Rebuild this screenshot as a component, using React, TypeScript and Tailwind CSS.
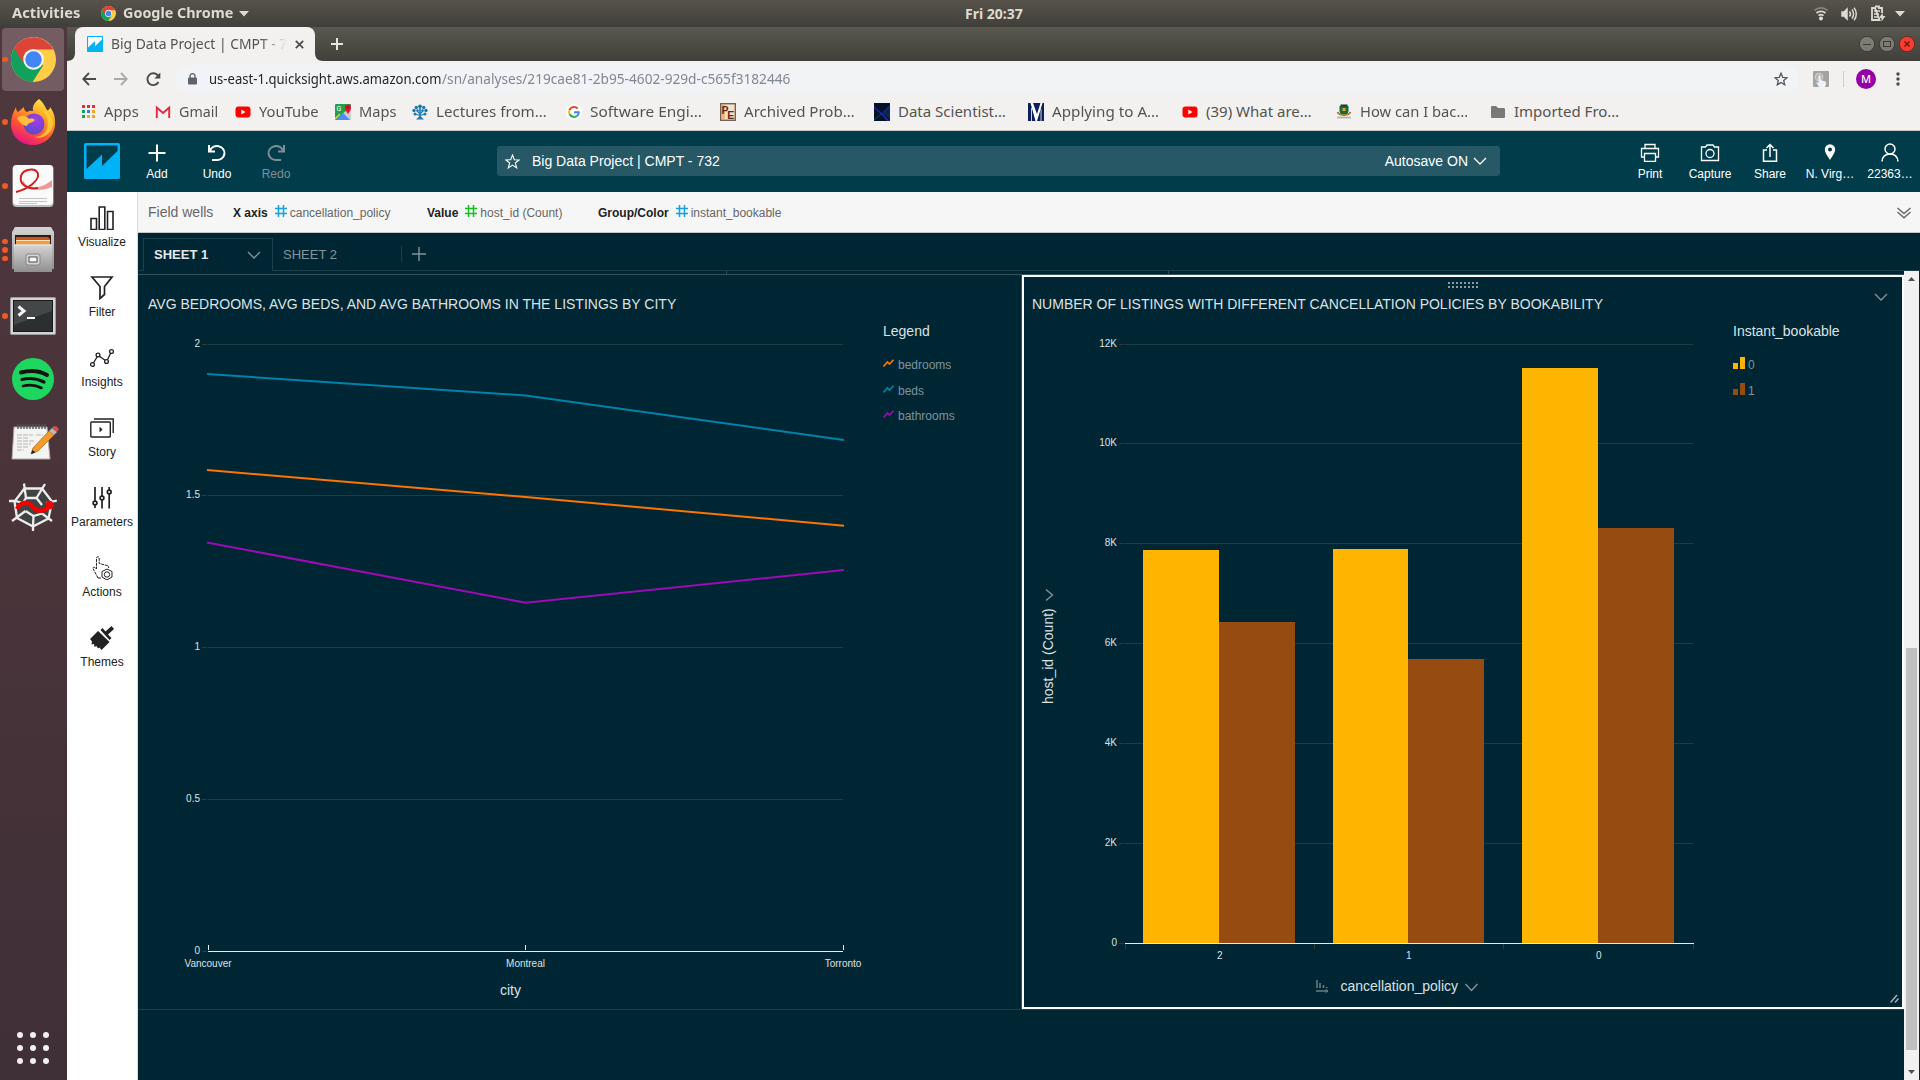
import React, { useLayoutEffect, useRef, useState } from "react";

/* Text that is condensed or widened to fill an exact width. */
function Fit({ w, className = "", children }: { w: number; className?: string; children: React.ReactNode }) {
  const ref = useRef<HTMLSpanElement>(null);
  const [scale, setScale] = useState(1);
  useLayoutEffect(() => {
    if (ref.current) setScale(w / ref.current.offsetWidth);
  }, [w]);
  return (
    <span className="inline-block shrink-0 whitespace-nowrap" style={{ width: w }}>
      <span ref={ref} className={"inline-block origin-left whitespace-nowrap " + className} style={{ transform: `scaleX(${scale})` }}>
        {children}
      </span>
    </span>
  );
}

function ChromeLogo({ size }: { size: number }) {
  return (
    <svg width={size} height={size} viewBox="0 0 48 48" className="shrink-0">
      <circle cx="24" cy="24" r="24" fill="#ffcd46" />
      <path d="M24 24 L3.2 12 A24 24 0 0 0 23 48 L34.4 30Z" fill="#12a05d" />
      <path d="M3.2 12 A24 24 0 0 1 45.2 13.2 L24 13.2 A10.8 10.8 0 0 0 14 29Z" fill="#db4437" />
      <circle cx="24" cy="24" r="11" fill="#f3f3f3" />
      <circle cx="24" cy="24" r="8.8" fill="#4285f4" />
    </svg>
  );
}

function FirefoxLogo() {
  return (
    <svg width="46" height="48" viewBox="0 0 46 48">
      <defs>
        <linearGradient id="ffo" x1="0.8" y1="0" x2="0.3" y2="1">
          <stop offset="0" stopColor="#fff44f" />
          <stop offset="0.35" stopColor="#ffa021" />
          <stop offset="0.7" stopColor="#ff4b3a" />
          <stop offset="1" stopColor="#e3128c" />
        </linearGradient>
        <radialGradient id="ffp" cx="0.6" cy="0.3" r="0.8">
          <stop offset="0" stopColor="#a43be8" />
          <stop offset="1" stopColor="#4b4ec8" />
        </radialGradient>
      </defs>
      <path d="M29 1C34 5 35 9 37 12C38 13 40 11 40 9C44 14 45.500 20 45 27C44 39 34 47 23 47C10 47 1 38 1 26C1 20 3 14 6 9C6 12 7 13 8 14C10 12 12 11 14 9C14 12 15 13 17 14C20 12 22 13 23 13C22 8 25 4 29 1Z" fill="url(#ffo)" />
      <circle cx="24" cy="26" r="10.500" fill="url(#ffp)" />
      <path d="M7 20C11 17 16 17 19 21C22 20 24 21 25 22C23 25 18 24 17 28C13 28 9 24 7 20Z" fill="#ffbd3a" />
      <path d="M33 12C37 18 39 24 37 30C35 36 30 39 24 39C32 42 42 36 43 26C43 20 39 15 33 12Z" fill="#ffd83a" opacity="0.75" />
    </svg>
  );
}

function DocLogo() {
  return (
    <svg width="42" height="44" viewBox="0 0 42 44">
      <rect x="0.500" y="1" width="41" height="42" rx="4" fill="#bdbdbd" />
      <rect x="1" y="1" width="40" height="40" rx="4" fill="#fafafa" />
      <path d="M11 20C16 26 28 28 40 23V16C33 22 26 24 20 23C15 22 12 19 11 16Z" fill="#ee6a6a" opacity="0.7" />
      <path d="M4 28C16 25 27 17 26 10C24 3 11 5 9 12C7 20 15 26 26 24" fill="none" stroke="#d01f1f" strokeWidth="2" />
      <path d="M7 34.500H35M7 37.500H35M7 39.500H25" stroke="#c4c4c4" strokeWidth="1" />
    </svg>
  );
}

function FilesLogo() {
  return (
    <svg width="42" height="46" viewBox="0 0 42 46">
      <defs>
        <linearGradient id="cab" x1="0" y1="0" x2="0" y2="1">
          <stop offset="0" stopColor="#d4d4d4" />
          <stop offset="1" stopColor="#909090" />
        </linearGradient>
      </defs>
      <path d="M3 0H39L42 5V42H0V5Z" fill="url(#cab)" />
      <rect x="3" y="8" width="36" height="10" fill="#2b1c14" />
      <path d="M4 10H36L38 12V18H4Z" fill="#c9541f" />
      <rect x="4" y="13" width="34" height="5" fill="#f19a45" />
      <path d="M4 13.500H38" stroke="#ffe3b0" strokeWidth="1.200" />
      <rect x="2" y="17.500" width="38" height="27.500" fill="url(#cab)" />
      <path d="M2 18H40" stroke="#e8e8e8" />
      <rect x="14" y="27" width="14" height="11" rx="2" fill="#d5d5d5" stroke="#858585" />
      <rect x="17" y="30" width="8" height="5" fill="#f6f6f6" stroke="#4d4d4d" />
    </svg>
  );
}

function TerminalLogo() {
  return (
    <svg width="46" height="38" viewBox="0 0 46 38">
      <rect x="0.500" y="0.500" width="45" height="37" rx="1" fill="#d4d4d4" stroke="#9b9b9b" />
      <rect x="3.500" y="3.500" width="39" height="31" fill="#2b2f2f" stroke="#191919" />
      <path d="M4 4H42V14L4 28Z" fill="#434748" />
      <path d="M8.500 9.500L14 14L8.500 18.500" fill="none" stroke="#f2f2f2" strokeWidth="3" />
      <path d="M17 21H25" stroke="#fff" strokeWidth="2" />
    </svg>
  );
}

function SpotifyLogo() {
  return (
    <svg width="42" height="42" viewBox="0 0 42 42">
      <circle cx="21" cy="21" r="21" fill="#1ed760" />
      <g fill="none" stroke="#121212" strokeLinecap="round">
        <path d="M9 14.500C18 12 28 13 35 17" strokeWidth="4" />
        <path d="M10 21.500C18 19.500 25 20.500 32 24" strokeWidth="3.200" />
        <path d="M11 28C18 26.300 24 27 29.500 30" strokeWidth="2.600" />
      </g>
    </svg>
  );
}

function NotesLogo() {
  return (
    <svg width="48" height="38" viewBox="0 0 48 38" className="translate-x-0.5">
      <path d="M3 4H36L39 36H1Z" fill="#f4f4f2" stroke="#a9a9a9" />
      <path d="M7 1V6M10 1V6M13 1V6M16 1V6M19 1V6M22 1V6M25 1V6M28 1V6M31 1V6M34 1V6" stroke="#555" strokeWidth="1.400" />
      <path d="M6 12H22M25 12H32M6 15H18M6 18H24M6 21H20M6 24H17M6 27H13" stroke="#b5b5b5" strokeWidth="1" strokeDasharray="5 1" />
      <path d="M22 25L38 8L43 12L27 28L20 31Z" fill="#f39c2c" stroke="#b86b16" strokeWidth="0.800" />
      <path d="M38 8L41 5L46 9L43 12Z" fill="#b9b9b9" />
      <path d="M41 4.500C43 2 48 3 47.500 7L46 9Z" fill="#e34a4a" />
      <path d="M20 31L21.500 27L24.500 29.500Z" fill="#222" />
    </svg>
  );
}

function SpyderLogo() {
  return (
    <svg width="48" height="48" viewBox="0 0 48 48">
      <path d="M15.500 5.500H33L43 18.500L39.500 35.500L24 43.500L8 35L5.500 18.500Z" fill="#3f4443" />
      <g fill="none" stroke="#ededed" strokeWidth="2.300">
        <path d="M15.500 5.500H33L43 18.500L39.500 35.500L24 43.500L8 35L5.500 18.500Z" />
        <path d="M15 0.500L17 15M36 1L27.500 15M47.800 17.500L37 20M43 38L33 30.500M3 38L16.500 28M0 18H6L14 20M24 43V48M24 43L24.500 33" />
        <path d="M14 20L17 15L27.500 15L33 22M33 30.500L24.500 33L16.500 28" />
      </g>
      <path d="M8 26C12 19 18 18 23 23C29 30 35 29 42 22" fill="none" stroke="#f00000" strokeWidth="4.500" />
      <circle cx="40.500" cy="22" r="4.300" fill="#f00000" />
    </svg>
  );
}

const dock = [
  { h: 63, mt: 1, dots: 1, active: true, icon: <ChromeLogo size={45} /> },
  { h: 64, mt: -1, dots: 1, icon: <FirefoxLogo /> },
  { h: 64, mt: 0, dots: 1, icon: <DocLogo /> },
  { h: 64, mt: 0, dots: 3, icon: <FilesLogo /> },
  { h: 64, mt: 2, dots: 1, icon: <TerminalLogo /> },
  { h: 62, mt: 0, dots: 0, icon: <SpotifyLogo /> },
  { h: 64, mt: 0, dots: 0, icon: <NotesLogo /> },
  { h: 64, mt: 1, dots: 0, icon: <SpyderLogo /> },
];

function Dock() {
  return (
    <div className="flex w-[67px] shrink-0 flex-col bg-linear-to-b from-[#4f373e] via-[#49343a] to-[#3f2f37]">
      {dock.map((d, i) => (
        <div key={i} className="relative flex w-full shrink-0 items-center justify-center pr-px" style={{ height: d.h, marginTop: d.mt }}>
          {d.active && <div className="absolute inset-y-0 left-[2px] w-[62px] rounded-[4px] bg-[#735c62]" />}
          <div className="absolute left-[2px] flex h-full flex-col items-center justify-center gap-[3px]">
            {Array.from({ length: d.dots }, (_, k) => (
              <div key={k} className="size-[5.500px] rounded-full bg-[#f05a24]" />
            ))}
          </div>
          <div className="relative flex">{d.icon}</div>
        </div>
      ))}
      <div className="mt-auto mb-4 mr-px grid grid-cols-3 gap-[7px] self-center">
        {Array.from({ length: 9 }, (_, k) => (
          <div key={k} className="size-[6px] rounded-full bg-[#f2efef]" />
        ))}
      </div>
    </div>
  );
}

function QuickLogo({ size, bg }: { size: number; bg: string }) {
  return (
    <svg width={size} height={size} viewBox="0 0 36 36" className="shrink-0">
      <rect width="36" height="36" rx="1.500" fill="#00b3f6" />
      <path d="M2.500 2.500H33.500V8L18 23V11.500L2.500 26Z" fill={bg} />
    </svg>
  );
}

function SystemBar() {
  return (
    <div className="grid h-[27px] shrink-0 grid-cols-3 items-center bg-linear-to-b from-[#57534b] to-[#403f3a] pb-px font-['Noto_Sans'] text-[14.500px] font-bold text-[#dfdbd2]">
      <div className="flex items-center pl-3">
        <Fit w={68}>Activities</Fit>
        <span className="ml-[21px] mr-[7px] flex"><ChromeLogo size={15} /></span>
        <Fit w={110}>Google Chrome</Fit>
        <svg width="10" height="6" className="ml-1.5 mt-0.5"><path d="M0 0H10L5 5.500Z" fill="#dfdbd2" /></svg>
      </div>
      <div className="flex justify-center pl-[68px] text-[14px]"><Fit w={58}>Fri 20:37</Fit></div>
      <div className="flex items-center justify-end pr-[15px] pt-px">
        <svg width="14" height="14" viewBox="0 0 14 14" fill="none" stroke="#dfdbd2" strokeWidth="1.700">
          <path d="M0.500 3.500C4 0 10 0 13.500 3.500" opacity="0.400" />
          <path d="M2.500 6C5 3.800 9 3.800 11.500 6M4.500 8.700C6 7.500 8 7.500 9.500 8.700" />
          <circle cx="7" cy="11.500" r="1.200" fill="#dfdbd2" />
        </svg>
        <svg width="16" height="14" viewBox="0 0 16 14" className="ml-[13px]" fill="none" stroke="#dfdbd2" strokeWidth="1.500">
          <path d="M1 5H3L6 2V12L3 9H1Z" fill="#dfdbd2" />
          <path d="M8.500 4.500C9.700 6 9.700 8 8.500 9.500M11 2.500C13 5 13 9 11 11.500M13 0.800C16 4 16 10 13 13.200" />
        </svg>
        <svg width="15" height="17" viewBox="0 0 15 17" className="ml-[14px]">
          <path d="M4 1.500H8V3H11V8M8.500 15H1V3H4Z" fill="none" stroke="#dfdbd2" strokeWidth="1.800" />
          <path d="M3 6H9M3 9H8M3 12H7" stroke="#dfdbd2" strokeWidth="1.400" />
          <path d="M11.500 8L8 13H10.500V16.500L14.500 11H12Z" fill="#dfdbd2" />
        </svg>
        <svg width="10" height="6" className="ml-[9px]"><path d="M0 0H10L5 5.500Z" fill="#dfdbd2" /></svg>
      </div>
    </div>
  );
}

function TabStrip() {
  return (
    <div className="flex h-[34px] shrink-0 bg-linear-to-b from-[#5a594f] to-[#403f3a]">
      <svg width="8" height="34" className="shrink-0"><path d="M0 34C5 34 8 31 8 26V34Z" fill="#f2f1f0" /></svg>
      <div className="flex h-full w-[240px] items-center rounded-t-[8px] bg-[#f2f1f0] font-['Noto_Sans'] text-[14.500px] text-[#55534f]">
        <span className="ml-3 mr-2 flex"><QuickLogo size={16} bg="#fff" /></span>
        <span className="mask-r-from-85%"><Fit w={176}>Big Data Project | CMPT - 7</Fit></span>
        <svg width="9" height="9" viewBox="0 0 9 9" className="ml-2"><path d="M0.800 0.800L8.200 8.200M8.200 0.800L0.800 8.200" stroke="#4a4a48" strokeWidth="1.700" /></svg>
      </div>
      <svg width="8" height="34" className="shrink-0"><path d="M8 34C3 34 0 31 0 26V34Z" fill="#f2f1f0" /></svg>
      <svg width="12" height="12" viewBox="0 0 12 12" className="ml-2 mt-[11px]"><path d="M6 0V12M0 6H12" stroke="#e8e6e1" strokeWidth="2" /></svg>
      <div className="ml-auto flex items-center gap-1 pr-[5px]">
        <svg width="16" height="16" viewBox="0 0 16 16"><circle cx="8" cy="8" r="7.700" fill="#7d7b74" stroke="#3a3934" /><path d="M4 8.500H12" stroke="#3a3934" /></svg>
        <svg width="16" height="16" viewBox="0 0 16 16"><circle cx="8" cy="8" r="7.700" fill="#7d7b74" stroke="#3a3934" /><rect x="4.500" y="5.500" width="7" height="5" fill="none" stroke="#3a3934" /></svg>
        <svg width="16" height="16" viewBox="0 0 16 16"><circle cx="8" cy="8" r="7.700" fill="#fa3c2e" stroke="#5c2f29" /><path d="M5.500 5.500L10.500 10.500M10.500 5.500L5.500 10.500" stroke="#5d1611" strokeWidth="1.200" /></svg>
      </div>
    </div>
  );
}

function AddressBar() {
  return (
    <div className="flex h-9 shrink-0 items-center bg-[#f2f1f0] font-['Noto_Sans']">
      <svg width="14" height="14" viewBox="0 0 14 14" className="ml-[15px]" fill="none" stroke="#4a4a48" strokeWidth="1.800"><path d="M14 7H1.500M7 1L1.200 7L7 13" /></svg>
      <svg width="14" height="14" viewBox="0 0 14 14" className="ml-[18px]" fill="none" stroke="#acaaa8" strokeWidth="1.800"><path d="M0 7H12.500M7 1L12.800 7L7 13" /></svg>
      <svg width="15" height="15" viewBox="0 0 15 15" className="ml-[18px]"><path d="M12.500 10A5.900 5.900 0 1 1 12 3.600" fill="none" stroke="#4a4a48" strokeWidth="1.900" /><path d="M14.300 0.500V6.500H8.300Z" fill="#4a4a48" /></svg>
      <div className="ml-[14px] flex h-7 w-[1624px] items-center rounded-full bg-[#f1f3f6] text-[14px]">
        <svg width="9" height="12" viewBox="0 0 9 12" className="ml-[13px] mr-3"><rect y="4.500" width="9" height="7" rx="1" fill="#5f6368" /><path d="M2 5V3.200A2.500 2.500 0 0 1 7 3.200V5" fill="none" stroke="#5f6368" strokeWidth="1.300" /></svg>
        <div className="flex pb-0.5">
          <Fit w={232.5} className="text-[#242526]">us-east-1.quicksight.aws.amazon.com</Fit>
          <Fit w={348.5} className="text-[#84878b]">/sn/analyses/219cae81-2b95-4602-929d-c565f3182446</Fit>
        </div>
        <svg width="14" height="14" viewBox="0 0 14 14" className="ml-auto mr-[11px]"><path d="M7 1.200L8.700 5.300L13 5.700L9.700 8.500L10.700 12.800L7 10.500L3.300 12.800L4.300 8.500L1 5.700L5.300 5.300Z" fill="none" stroke="#55585c" strokeWidth="1.300" /></svg>
      </div>
      <svg width="16" height="16" viewBox="0 0 16 16" className="ml-[14px]"><rect width="16" height="16" rx="1" fill="#a3a3a3" /><circle cx="6" cy="6" r="3.800" fill="#b5b5b5" stroke="#d2d2d2" /><path d="M5.500 5.500C5.500 4 7.500 4 7.500 5.500V9L12.500 10.500C13.500 11 13 14 12 16H6L3 11L5.500 12Z" fill="#eef3fa" /></svg>
      <div className="ml-[14px] h-4 w-px bg-[#cfcdcb]" />
      <div className="ml-3 flex size-5 items-center justify-center rounded-full bg-[#9500a6] font-['Noto_Sans'] text-[11px] font-medium text-white">M</div>
      <svg width="4" height="14" viewBox="0 0 4 14" className="ml-[20px]" fill="#4a4a48"><circle cx="2" cy="2" r="1.700" /><circle cx="2" cy="7" r="1.700" /><circle cx="2" cy="12" r="1.700" /></svg>
    </div>
  );
}

const YouTubeIcon = (
  <svg width="16" height="16" viewBox="0 0 16 16"><rect x="0.500" y="2.500" width="15" height="11" rx="3" fill="#f00" /><path d="M6.300 5.500V10.500L10.500 8Z" fill="#fff" /></svg>
);

const appColors = ["#f0283c", "#f0283c", "#f0283c", "#14a35c", "#2f7df6", "#f6a51e", "#14a35c", "#f6a51e", "#f6a51e"];

const bookmarks: { w: number; tw: number; label: string; icon: React.ReactNode }[] = [
  { w: 75, tw: 34.5, label: "Apps", icon: <svg width="16" height="16" viewBox="0 0 16 16">{appColors.map((c, i) => <rect key={i} x={2 + (i % 3) * 5} y={1 + Math.floor(i / 3) * 5} width="3" height="3" fill={c} />)}</svg> },
  { w: 80, tw: 39, label: "Gmail", icon: <svg width="16" height="16" viewBox="0 0 16 16"><rect x="1" y="3" width="14" height="11" fill="#f2f2f2" /><path d="M1.800 14V3.500L8 9L14.200 3.500V14" fill="none" stroke="#e8283c" strokeWidth="1.900" /></svg> },
  { w: 100, tw: 60, label: "YouTube", icon: YouTubeIcon },
  { w: 77, tw: 37, label: "Maps", icon: <svg width="16" height="16" viewBox="0 0 16 16"><rect width="16" height="16" rx="1" fill="#1fa04a" /><path d="M16 3V16H11L7 10Z" fill="#c9cdd2" /><path d="M1 16L8 9L15 16Z" fill="#4d8cf5" /><path d="M0 15L5 10" stroke="#f7d04b" strokeWidth="1.500" /><text x="1.500" y="7" fontSize="7" fill="#fff" fontFamily="Roboto">G</text><path d="M13 10C11 7 10 5.500 10 3.500A3 3 0 0 1 16 3.500C16 5.500 15 7 13 10Z" fill="#e7112e" /><circle cx="13" cy="3.500" r="1.100" fill="#8d0b20" /></svg> },
  { w: 154, tw: 111, label: "Lectures from…", icon: <svg width="16" height="16" viewBox="0 0 16 16" fill="#1a78ae"><circle cx="8" cy="2.300" r="1.900" /><circle cx="4.300" cy="3.500" r="1.700" /><circle cx="11.700" cy="3.500" r="1.700" /><circle cx="2" cy="6.500" r="1.700" /><circle cx="14" cy="6.500" r="1.700" /><circle cx="3" cy="10" r="1.500" /><circle cx="13" cy="10" r="1.500" /><circle cx="5.500" cy="6.500" r="1.300" /><circle cx="10.500" cy="6.500" r="1.300" /><path d="M7.200 4H8.800V12.500L12 15.500H4L7.200 12.500Z" /><path d="M3 10L8 11.500L13 10M5 7L8 10L11 7" fill="none" stroke="#1a78ae" strokeWidth="1.100" /></svg> },
  { w: 154, tw: 112, label: "Software Engi…", icon: <svg width="16" height="16" viewBox="0 0 16 16" fill="none" strokeWidth="2"><circle cx="8" cy="8" r="8" fill="#fff" /><path d="M11.700 4.500A5 5 0 0 0 3.500 6" stroke="#ea4335" /><path d="M3.500 6A5 5 0 0 0 3.500 10" stroke="#fbbc05" /><path d="M3.500 10A5 5 0 0 0 11.300 11.700" stroke="#34a853" /><path d="M11.300 11.700A5 5 0 0 0 12.800 8.200H8" stroke="#4285f4" /></svg> },
  { w: 154, tw: 110.5, label: "Archived Prob…", icon: <svg width="16" height="18" viewBox="0 0 16 18"><rect x="0.700" y="0.700" width="14.600" height="16.600" fill="#f8dfc5" stroke="#6f625a" strokeWidth="1.400" /><path d="M1.500 1.500H5V16.500H1.500Z" fill="#f0a45e" opacity="0.700" /><text x="1.500" y="10.500" fontSize="10.500" fontWeight="bold" fill="#5b2c20" fontFamily="Liberation Sans">P</text><text x="7.300" y="15.500" fontSize="10.500" fontWeight="bold" fill="#5b2c20" fontFamily="Liberation Sans">E</text></svg> },
  { w: 154, tw: 108, label: "Data Scientist…", icon: <svg width="16" height="18" viewBox="0 0 16 18"><rect width="16" height="18" fill="#031226" /><path d="M0 3L7.500 10L16 2V4L9 11L16 18H13L7 11.500L0 5Z" fill="#2a1fa8" /><path d="M8 10L16 4V16Z" fill="#052a4a" /><path d="M0 17L7 11" stroke="#0b4a76" /></svg> },
  { w: 154, tw: 107.5, label: "Applying to A…", icon: <svg width="16" height="18" viewBox="0 0 16 18"><rect width="16" height="18" fill="#0c1f5c" /><path d="M2.500 0H5L9 11L12.500 0H14.500L9 18H7.500Z" fill="#fff" /><path d="M3.500 5V18M13 6V18" stroke="#fff" strokeWidth="0.800" /></svg> },
  { w: 154, tw: 106, label: "(39) What are…", icon: YouTubeIcon },
  { w: 154, tw: 108, label: "How can I bac…", icon: <svg width="16" height="16" viewBox="0 0 16 16"><path d="M3.500 2H12.500V7C12.500 9.500 10 11 8 11.500C6 11 3.500 9.500 3.500 7Z" fill="#0f6b43" /><rect x="4.500" y="0.500" width="7" height="1.800" fill="#26352c" /><rect x="6.500" y="4" width="3" height="3" fill="#e0a830" /><path d="M1.500 8C3 12 13 12 14.500 8" fill="none" stroke="#a67a24" strokeWidth="1.800" /><path d="M1 13.500H15" stroke="#b5b5b5" strokeWidth="1.800" /></svg> },
  { w: 130, tw: 105, label: "Imported Fro…", icon: <svg width="16" height="16" viewBox="0 0 16 16"><path d="M1 3.500C1 2.500 1.500 2 2.500 2H6L8 4H13.500C14.500 4 15 4.500 15 5.500V12.500C15 13.500 14.500 14 13.500 14H2.500C1.500 14 1 13.500 1 12.500Z" fill="#7b7978" /></svg> },
];

function BookmarksBar() {
  return (
    <div className="flex h-[34px] shrink-0 items-center border-b border-[#c9c6c4] bg-[#f2f1f0] pl-[13px] font-['Noto_Sans'] text-[15px] leading-5 text-[#55534f]">
      {bookmarks.map((b) => (
        <div key={b.label} className="flex shrink-0 items-center gap-2 pb-[3px]" style={{ width: b.w }}>
          <span className="flex h-[18px] w-4 items-center">{b.icon}</span>
          <span className="flex pb-0.5"><Fit w={b.tw}>{b.label}</Fit></span>
        </div>
      ))}
    </div>
  );
}

function HeaderButton({ label, dim, children }: { label: string; dim?: boolean; children: React.ReactNode }) {
  return (
    <div className={"flex w-[60px] shrink-0 flex-col items-center pt-[11px] " + (dim ? "-ml-px text-[#808f95]" : "text-white")}>
      <svg width="20" height="20" viewBox="0 0 20 20" fill="none" stroke="currentColor" strokeWidth="1.300">{children}</svg>
      <span className="mt-1 text-[12px] leading-4">{label}</span>
    </div>
  );
}

function AppHeader() {
  return (
    <div className="flex h-[61px] shrink-0 bg-[#013c4b]">
      <div className="w-[60px] pl-[17px] pt-3"><QuickLogo size={36} bg="#013c4b" /></div>
      <HeaderButton label="Add"><path d="M10 2.500V19.500M1.500 11H18.500" strokeWidth="2" /></HeaderButton>
      <HeaderButton label="Undo"><path d="M2 3V9.500H8M2.800 9A7.500 7 0 1 1 9.500 18H5" strokeWidth="2" /></HeaderButton>
      <HeaderButton label="Redo" dim><path d="M18 3V9.500H12M17.200 9A7.500 7 0 1 0 10.500 18H15" strokeWidth="2" /></HeaderButton>
      <div className="ml-[191px] mt-[15px] flex h-[30px] w-[1003px] items-center rounded-[3px] bg-[#265866] text-[14px] text-white">
        <svg width="15" height="15" viewBox="0 0 15 15" className="ml-2 mr-[12px]"><path d="M7.500 1L9.300 5.700L14.200 5.900L10.300 9L11.700 13.900L7.500 11.100L3.300 13.900L4.700 9L0.800 5.900L5.700 5.700Z" fill="none" stroke="#fff" strokeWidth="1.100" /></svg>
        Big Data Project | CMPT - 732
        <span className="ml-auto">Autosave ON</span>
        <svg width="14" height="8" viewBox="0 0 14 8" className="ml-[5px] mr-[13px]"><path d="M1 1L7 7L13 1" fill="none" stroke="#fff" strokeWidth="1.300" /></svg>
      </div>
      <div className="ml-auto flex">
        <HeaderButton label="Print"><path d="M5 6V2.500H15V6M4 15H1.500V6.500H18.500V15H16M4.500 11.500H15.500V19.300H4.500Z" /></HeaderButton>
        <HeaderButton label="Capture"><path d="M1.500 5H5.500L7 3H13L14.500 5H18.500V18.500H1.500Z" /><circle cx="10" cy="11.500" r="4" /></HeaderButton>
        <HeaderButton label="Share"><path d="M7 8H3.500V19.300H16.500V8H13M10 15V3M6.500 6L10 2.500L13.500 6" strokeWidth="1.500" /></HeaderButton>
        <HeaderButton label="N. Virg…"><path d="M10 18C7 13 4.800 10.300 4.800 7.500A5.200 5.200 0 0 1 15.200 7.500C15.200 10.300 13 13 10 18Z" fill="#fff" stroke="none" /><circle cx="10" cy="7.500" r="2" fill="#013c4b" stroke="none" /></HeaderButton>
        <HeaderButton label="22363…"><circle cx="10" cy="7" r="5" strokeWidth="1.500" /><path d="M2 19.500C2.500 14.300 6 12 10 12S17.500 14.300 18 19.500" strokeWidth="1.500" /></HeaderButton>
      </div>
    </div>
  );
}

const sideItems: { label: string; icon: React.ReactNode }[] = [
  { label: "Visualize", icon: <path d="M1 12.500H6.500V23.500H1ZM9.200 1H14.800V23.500H9.200ZM17.500 5.500H23V23.500H17.500Z" strokeWidth="1.600" /> },
  { label: "Filter", icon: <path d="M2 1H22L14.500 10.500V18.500L10 22.500V10.500Z" strokeWidth="1.700" /> },
  { label: "Insights", icon: <g strokeWidth="1.300"><circle cx="2.500" cy="18.500" r="1.900" /><circle cx="8" cy="9" r="1.900" /><circle cx="16.500" cy="15.500" r="1.900" /><circle cx="21.500" cy="5.500" r="1.900" /><path d="M3.500 17L7 11M9.500 10.300L15 14.300M17.500 13.800L20.600 7.300" /></g> },
  { label: "Story", icon: <g strokeWidth="1.400"><rect x="0.800" y="6" width="19.500" height="15" rx="0.800" /><path d="M4 3H23.200V17" /><path d="M9.500 10.500V16.500L12.500 13.500Z" fill="#222" stroke="none" /></g> },
  { label: "Parameters", icon: <g strokeWidth="1.700"><path d="M5 1V15M5 19V22M12 1V10M12 14V22.500M19.200 1V4M19.200 8V22.500" /><circle cx="5" cy="17" r="1.900" /><circle cx="12" cy="12" r="1.900" /><circle cx="19.200" cy="6" r="1.900" /></g> },
  { label: "Actions", icon: <g strokeWidth="1"><path d="M8 22L3 12.500C2.500 11 4.500 10.500 6.500 13V2C6.500 0.300 9.200 0.300 9.200 2V7.500L17 9.500C18.500 10 18.700 10.500 18.700 12" strokeDasharray="3 0.800" /><path d="M8 22H11" /><path d="M17 13L22 15.500V21L17 24L12 21V15.500Z" /><circle cx="17" cy="18.500" r="2.700" /></g> },
  { label: "Themes", icon: <g stroke="none" fill="#222"><path d="M8.500 4.500L20 15.500L11.500 24L9.500 21.500L8 22.500L6.500 20L4.500 21L4 18L1.500 18.500L2 15.500L0 13Z" /><path d="M8 4L20.500 16" stroke="#fff" strokeWidth="1.200" /><path d="M10.500 4L12.500 2L15.500 5.500L21.500 0L24 3L18 8.500L21.500 12L19.500 14Z" /></g> },
];

function Sidebar() {
  return (
    <div className="flex w-[71px] shrink-0 flex-col border-r border-[#dcdcdc] bg-white">
      {sideItems.map((s) => (
        <div key={s.label} className="flex h-[70px] flex-col items-center pt-[14px]">
          <svg width="24" height="24" viewBox="0 0 24 24" fill="none" stroke="#222">{s.icon}</svg>
          <span className="mt-1 text-[12px] leading-4 text-[#222]">{s.label}</span>
        </div>
      ))}
    </div>
  );
}

function Hash({ color }: { color: string }) {
  return (
    <svg width="12" height="12" viewBox="0 0 12 12" className="mb-[4px] ml-[7px] mr-[3px]"><path d="M3.500 0V12M8.500 0V12M0 3.500H12M0 8.500H12" stroke={color} strokeWidth="1.500" /></svg>
  );
}

function FieldWells() {
  return (
    <div className="flex h-[41px] shrink-0 items-center border-b border-[#c6c6c6] bg-[#f6f6f6] pl-[10px] text-[12px] text-[#666]">
      <span className="w-[85px] text-[14px]">Field wells</span>
      <div className="flex w-[194px] items-center pt-0.5"><b className="text-[#222]">X axis</b><Hash color="#16a0dc" />cancellation_policy</div>
      <div className="flex w-[171px] items-center pt-0.5"><b className="text-[#222]">Value</b><Hash color="#0fc21c" />host_id (Count)</div>
      <div className="flex items-center pt-0.5"><b className="text-[#222]">Group/Color</b><Hash color="#16a0dc" />instant_bookable</div>
      <svg width="14" height="12" viewBox="0 0 14 12" className="ml-auto mr-[9px] mt-px"><path d="M0.500 1L7 6.500L13.500 1M0.500 5L7 10.700L13.500 5" fill="none" stroke="#666" strokeWidth="1.400" /></svg>
    </div>
  );
}

function SheetTabs() {
  return (
    <div className="flex h-[38px] shrink-0 text-[13px]">
      <div className="w-[5px] border-b border-[#1b404b]" />
      <div className="mt-[5px] flex w-[130px] items-center border-x border-t border-[#1b404b] pl-[10px] font-bold text-[#e3e8ea]">
        SHEET 1
        <svg width="14" height="8" viewBox="0 0 14 8" className="ml-auto mr-[11px]"><path d="M1 1L7 7L13 1" fill="none" stroke="#84959b" strokeWidth="1.300" /></svg>
      </div>
      <div className="flex flex-1 items-center border-b border-[#1b404b] pt-[5px] text-[#84959b]">
        <span className="ml-[10px] w-[118px] pt-px">SHEET 2</span>
        <div className="h-4 w-px bg-[#1b404b]" />
        <svg width="14" height="14" viewBox="0 0 14 14" className="ml-[10px]"><path d="M7 0V14M0 7H14" stroke="#84959b" strokeWidth="1.400" /></svg>
      </div>
    </div>
  );
}

const GRID = "#1b3d47";
const TICK = "#37383b";

function LineChart() {
  const rows = [["2", 344], ["1.5", 495], ["1", 647], ["0.5", 799]] as const;
  return (
    <svg width="745" height="690" viewBox="138 319 745 690" className="block" fontFamily="Liberation Sans" fill="#dbe2e4">
      {rows.map(([t, y]) => (
        <g key={t}>
          <rect x="208" y={y} width="635" height="1" fill={GRID} />
          <rect x="202" y={y} width="5" height="1" fill={TICK} />
          <text x="200" y={y + 3} fontSize="10" textAnchor="end">{t}</text>
        </g>
      ))}
      <rect x="202" y="951" width="5" height="1" fill={TICK} />
      <text x="200" y="954" fontSize="10" textAnchor="end">0</text>
      <path d="M208.500 945V950M525.500 945V950M843.500 945V950M208 951.500H843" stroke="#e8eced" fill="none" />
      <g fill="none" strokeWidth="2">
        <path d="M207 374L525.500 395.500L844 440" stroke="#0083a9" />
        <path d="M207 470L525.500 497L844 525.700" stroke="#ff7400" />
        <path d="M207 542.500L525.500 602.700L844 570" stroke="#9d0bb5" />
      </g>
      <g fontSize="10" textAnchor="middle">
        <text x="208" y="967">Vancouver</text>
        <text x="525.500" y="967">Montreal</text>
        <text x="843" y="967">Torronto</text>
      </g>
      <text x="510.500" y="995" fontSize="14" textAnchor="middle">city</text>
    </svg>
  );
}

function BarChart() {
  const rows = [["12K", 344], ["10K", 443], ["8K", 543], ["6K", 643], ["4K", 743], ["2K", 843]] as const;
  const bars = [["2", 1143, 1219, 550, 622], ["1", 1333, 1408, 549, 659], ["0", 1522, 1598, 368, 528]] as const;
  return (
    <svg width="700" height="688" viewBox="1024 319 700 688" className="block" fontFamily="Liberation Sans" fill="#dbe2e4">
      {rows.map(([t, y]) => (
        <g key={t}>
          <rect x="1125" y={y} width="568" height="1" fill={GRID} />
          <rect x="1119" y={y} width="5" height="1" fill={TICK} />
          <text x="1117" y={y + 3} fontSize="10" textAnchor="end">{t}</text>
        </g>
      ))}
      {bars.map(([t, x, m, a, b]) => (
        <g key={t}>
          <rect x={x} y={a} width={m - x} height={943 - a} fill="#ffb500" />
          <rect x={m} y={b} width="76" height={943 - b} fill="#964b10" />
          <text x={m + 0.7} y="959" fontSize="10" textAnchor="middle">{t}</text>
        </g>
      ))}
      <rect x="1119" y="943" width="5" height="1" fill={TICK} />
      <text x="1117" y="946" fontSize="10" textAnchor="end">0</text>
      <path d="M1125.500 944V949M1314.500 944V949M1503.500 944V949M1693.500 944V949" stroke={TICK} />
      <rect x="1125" y="943" width="569" height="1" fill="#e8eced" />
      <text transform="translate(1053 704) rotate(-90)" fontSize="14">host_id (Count)</text>
      <path d="M1046 589.500L1052.500 595L1046 600.500" fill="none" stroke="#84959b" strokeWidth="1.300" />
      <g stroke="#6b7f87" fill="none" strokeWidth="1.500">
        <path d="M1317 980V988M1320 983V988M1323.500 985V988M1327 987V988M1316 991H1328" />
        <path d="M1325.500 989L1328 991L1325.500 993" strokeWidth="1" />
      </g>
      <text x="1340.500" y="991" fontSize="14">cancellation_policy</text>
      <path d="M1465.500 984L1471.500 990.500L1477.500 984" fill="none" stroke="#84959b" strokeWidth="1.300" />
    </svg>
  );
}

function LegendLine({ color, label, cls }: { color: string; label: string; cls: string }) {
  return (
    <div className={"flex h-4 items-center " + cls}>
      <svg width="11" height="8" viewBox="0 0 11 8" className="mb-[4px] mr-1"><path d="M0.500 7.500L4.500 3L6.500 5L10.500 0.800" fill="none" stroke={color} strokeWidth="1.600" /></svg>
      {label}
    </div>
  );
}

function LegendBar({ color, label, cls }: { color: string; label: string; cls: string }) {
  return (
    <div className={"flex h-4 items-center " + cls}>
      <svg width="12" height="12" viewBox="0 0 12 12" className="mb-[4px] mr-[3px]"><path d="M0 6H5V12H0ZM7 0H12V12H7Z" fill={color} /></svg>
      {label}
    </div>
  );
}

function Canvas() {
  return (
    <div className="flex min-h-0 flex-1">
      <div className="flex w-[1766px] flex-col">
        <div className="flex h-[3px]">
          <div className="w-[589px] border-r border-[#2d4e58]" />
          <div className="w-[442px] border-r border-[#2d4e58]" />
        </div>
        <div className="flex h-[736px] border-b border-t border-b-[#1b404b] border-t-[#34535c]">
          <div className="flex w-[884px] border-r border-[#34535c]">
            <div className="w-[745px]">
              <h2 className="h-[44px] whitespace-nowrap pl-[10px] pt-[19px] text-[14px] leading-5 text-[#dbe2e4]">AVG BEDROOMS, AVG BEDS, AND AVG BATHROOMS IN THE LISTINGS BY CITY</h2>
              <LineChart />
            </div>
            <div className="pt-[46px] text-[12px] text-[#7f939b]">
              <h3 className="text-[14px] leading-5 text-[#dbe2e4]">Legend</h3>
              <LegendLine color="#ff7400" label="bedrooms" cls="mt-[16px]" />
              <LegendLine color="#0083a9" label="beds" cls="mt-[10px]" />
              <LegendLine color="#9d0bb5" label="bathrooms" cls="mt-[9px]" />
            </div>
          </div>
          <div className="relative flex flex-1 border-2 border-white">
            <svg width="31" height="6" viewBox="0 0 31 6" className="absolute left-[424px] top-[5px]">
              <path d="M0 1H30M0 5H30" stroke="#8b9ba1" strokeWidth="2" strokeDasharray="2 2" />
            </svg>
            <div className="w-[700px]">
              <h2 className="h-[42px] whitespace-nowrap pl-2 pt-[17px] text-[14px] leading-5 text-[#dbe2e4]">NUMBER OF LISTINGS WITH DIFFERENT CANCELLATION POLICIES BY BOOKABILITY</h2>
              <BarChart />
            </div>
            <div className="pl-[9px] pt-[44px] text-[12px] text-[#7f939b]">
              <h3 className="text-[14px] leading-5 text-[#dbe2e4]">Instant_bookable</h3>
              <LegendBar color="#ffb500" label="0" cls="mt-[16px]" />
              <LegendBar color="#964b10" label="1" cls="mt-[10px]" />
            </div>
            <svg width="14" height="8" viewBox="0 0 14 8" className="absolute right-[14px] top-4"><path d="M1 1L7 7L13 1" fill="none" stroke="#84959b" strokeWidth="1.300" /></svg>
            <svg width="9" height="9" viewBox="0 0 9 9" className="absolute bottom-[4px] right-[3px]"><path d="M0.500 8.500L7 1M5 8.500L8.500 4.500" stroke="#a6b3b8" strokeWidth="1.500" /></svg>
          </div>
        </div>
      </div>
      <div className="flex w-[15px] shrink-0 flex-col items-center bg-[#f1f1f1]">
        <svg width="15" height="377" viewBox="0 0 15 377" className="shrink-0"><path d="M4 10L7.500 6L11 10Z" fill="#505050" /></svg>
        <div className="h-[402px] w-[11px] shrink-0 bg-[#c1c1c1]" />
        <svg width="15" height="30" viewBox="0 0 15 30" className="shrink-0"><path d="M4 20L7.500 24L11 20Z" fill="#505050" /></svg>
      </div>
    </div>
  );
}

export default function App() {
  return (
    <div className="flex h-[1080px] w-[1920px] flex-col overflow-hidden bg-[#002633] font-['Liberation_Sans',sans-serif]">
      <SystemBar />
      <div className="flex min-h-0 flex-1">
        <Dock />
        <div className="flex min-w-0 flex-1 flex-col">
          <TabStrip />
          <AddressBar />
          <BookmarksBar />
          <AppHeader />
          <div className="flex min-h-0 flex-1">
            <Sidebar />
            <div className="flex min-w-0 flex-1 flex-col">
              <FieldWells />
              <SheetTabs />
              <Canvas />
            </div>
          </div>
        </div>
      </div>
    </div>
  );
}
